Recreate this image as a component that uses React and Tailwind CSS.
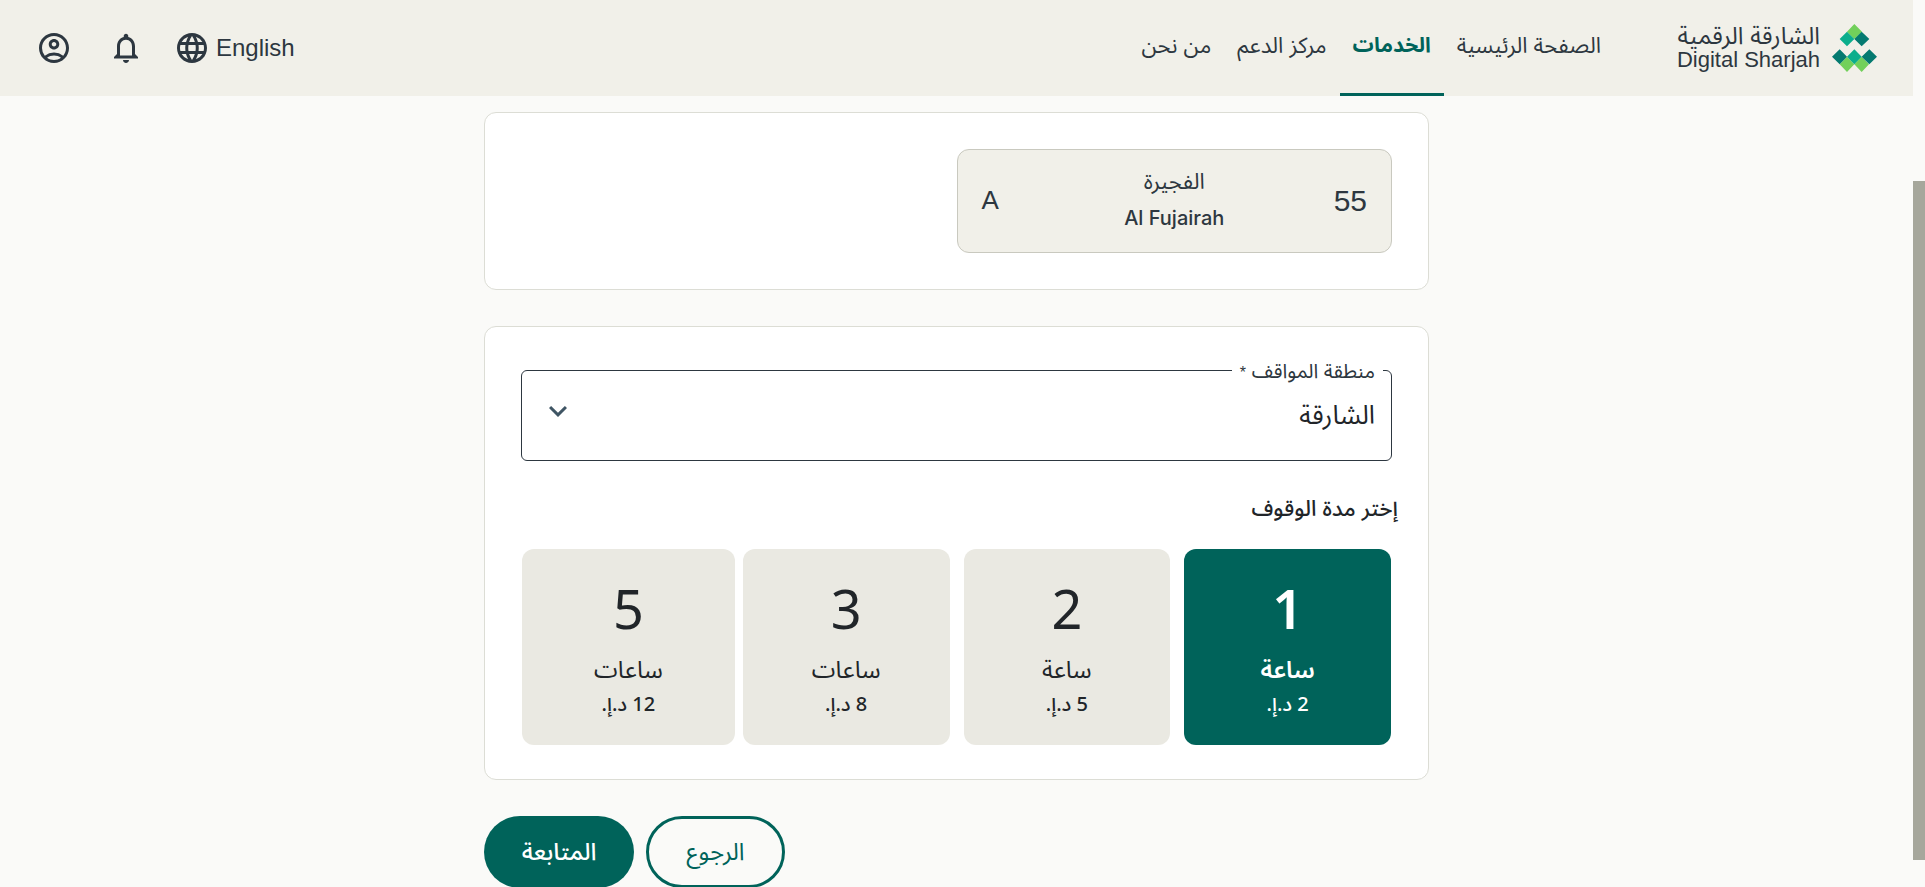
import { useState } from "react";
import {
  MdKeyboardArrowDown,
  MdLanguage,
  MdNotificationsNone,
  MdOutlineAccountCircle,
} from "react-icons/md";

const navLinks = [
  { label: "الصفحة الرئيسية" },
  { label: "الخدمات", active: true },
  { label: "مركز الدعم" },
  { label: "من نحن" },
];

const durations = [
  { hours: 1, unit: "ساعة", price: "2 د.إ.", grow: "grow-[207]", gap: "" },
  { hours: 2, unit: "ساعة", price: "5 د.إ.", grow: "grow-[207]", gap: "mr-3.5" },
  { hours: 3, unit: "ساعات", price: "8 د.إ.", grow: "grow-[207]", gap: "mr-3.5" },
  { hours: 5, unit: "ساعات", price: "12 د.إ.", grow: "grow-[213]", gap: "mr-2" },
];

function LogoMark() {
  return (
    <svg viewBox="576 71 135 144" className="h-12 w-[45px]" aria-hidden="true">
      <path fill="#72d05b" d="M643 71l23 23-23 22-22-22zM621 169l22 23-22 23-22-23zM665 169l22 23-22 23-22-23z" />
      <path fill="#0bae8c" d="M621 94l22 22-22 22-22-22zM643 147l22 22-22 23-22-23z" />
      <path fill="#047a70" d="M665 94l23 22-23 22-22-22zM599 147l22 22-22 23-23-23zM688 147l23 22-23 23-23-23z" />
    </svg>
  );
}

function Header() {
  return (
    <header className="flex h-24 items-center justify-between bg-[#f1f0e9] px-9 text-[#2d3740]">
      <div className="flex items-center self-stretch">
        <a href="#home" className="flex items-center gap-3">
          <LogoMark />
          <span className="flex w-[145px] flex-col leading-6 whitespace-nowrap">
            <span className="text-[24px]">الشارقة الرقمية</span>
            <span className="text-[22px]">Digital Sharjah</span>
          </span>
        </a>
        <nav className="mr-[61px] flex self-stretch">
          {navLinks.map((link) => (
            <a
              key={link.label}
              href="#nav"
              className={
                link.active
                  ? "flex items-center border-b-3 border-[#00635a] px-[13px] pb-1 text-[21px] font-bold text-[#00635a]"
                  : "flex items-center px-[13px] pb-1.5 text-[22px]"
              }
            >
              {link.label}
            </a>
          ))}
        </nav>
      </div>
      <div className="flex items-center">
        <button type="button" className="ml-[30px] flex items-center gap-1.5 text-[24px]">
          <span>English</span>
          <MdLanguage className="size-9" />
        </button>
        <button type="button" aria-label="الإشعارات" className="ml-9">
          <MdNotificationsNone className="size-9" />
        </button>
        <button type="button" aria-label="الحساب">
          <MdOutlineAccountCircle className="size-9" />
        </button>
      </div>
    </header>
  );
}

export default function App() {
  const [selected, setSelected] = useState(1);

  return (
    <div className="flex min-h-screen bg-[#fafaf8] font-['Liberation_Sans','Noto_Sans_Arabic','DejaVu_Sans',sans-serif]">
      <div dir="rtl" className="min-w-0 flex-1">
        <Header />
        <main className="mx-auto mt-4 flex max-w-[945px] flex-col gap-9">
          <section className="rounded-xl border border-[#dcddd5] bg-white p-9">
            <div className="grid h-[104px] w-1/2 grid-cols-3 items-center rounded-xl border border-[#c9c9bf] bg-[#f1f0e9] px-6 pb-0.5 text-[#2d3740]">
              <span className="text-[30px]">55</span>
              <span className="flex flex-col items-center text-[20px] leading-9">
                <span className="text-[22px]">الفجيرة</span>
                <span dir="ltr" className="font-['Inter',sans-serif] font-medium">Al Fujairah</span>
              </span>
              <span className="text-left text-[26px]">A</span>
            </div>
          </section>

          <section className="rounded-xl border border-[#dcddd5] bg-white px-9 pt-7 pb-[34px] text-[#212529]">
            <fieldset className="rounded-md border border-[#2d3740] px-2">
              <legend className="px-2 pt-1 text-[20px] leading-6 text-[#2d3740]">
                <label htmlFor="zone" className="block">
                  منطقة المواقف <span className="text-[16px]">*</span>
                </label>
              </legend>
              <div className="relative">
                <select id="zone" className="block h-[75px] w-full appearance-none bg-transparent px-2 pb-3.5 text-[26px] outline-none">
                  <option>الشارقة</option>
                </select>
                <MdKeyboardArrowDown className="pointer-events-none absolute top-2 left-2.5 size-9 text-[#3f5564]" />
              </div>
            </fieldset>

            <h2 className="mt-8 -mr-1.5 text-[22px] leading-8 font-medium">إختر مدة الوقوف</h2>

            <div className="mt-6 flex px-px">
              {durations.map((d) => (
                <button
                  key={d.hours}
                  type="button"
                  aria-pressed={selected === d.hours}
                  onClick={() => setSelected(d.hours)}
                  className={`flex h-[196px] basis-0 flex-col items-center rounded-xl pt-[27px] ${d.grow} ${d.gap} ${
                    selected === d.hours ? "bg-[#00635a] font-semibold text-white" : "bg-[#eae9e2]"
                  }`}
                >
                  <span className="font-['Noto_Sans',sans-serif] text-[54px] leading-16">{d.hours}</span>
                  <span className="mt-3 text-[24px] leading-9">{d.unit}</span>
                  <span className="font-['Noto_Sans','Noto_Sans_Arabic',sans-serif] text-[20px] leading-8 font-medium">{d.price}</span>
                </button>
              ))}
            </div>
          </section>

          <div className="flex justify-end gap-3 text-[24px]">
            <button type="button" className="h-18 w-[139px] rounded-full border-3 border-[#00635a] text-[#00635a]">
              الرجوع
            </button>
            <button type="button" className="h-18 w-[150px] rounded-full bg-[#00635a] font-medium text-white">
              المتابعة
            </button>
          </div>
        </main>
      </div>
      <div className="flex w-3 flex-col" aria-hidden="true">
        <div className="grow-[181]" />
        <div className="grow-[678] bg-[#a6a79c]" />
        <div className="grow-[28]" />
      </div>
    </div>
  );
}
